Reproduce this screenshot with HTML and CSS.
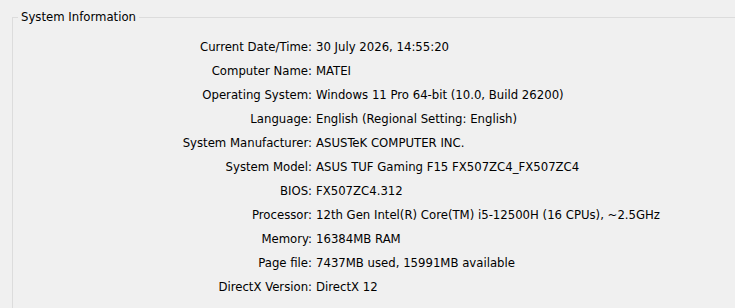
FILE: index.html
```html
<!DOCTYPE html>
<html lang="en">
<head>
<meta charset="utf-8">
<title>System Information</title>
<link rel="stylesheet" href="styles.css">
</head>
<body>
<fieldset class="group">
  <legend class="group-title">System Information</legend>
  <dl class="info">
    <dt>Current Date/Time:</dt><dd>30 July 2026, 14:55:20</dd>
    <dt>Computer Name:</dt><dd>MATEI</dd>
    <dt>Operating System:</dt><dd>Windows 11 Pro 64-bit (10.0, Build 26200)</dd>
    <dt>Language:</dt><dd>English (Regional Setting: English)</dd>
    <dt>System Manufacturer:</dt><dd>ASUSTeK COMPUTER INC.</dd>
    <dt>System Model:</dt><dd>ASUS TUF Gaming F15 FX507ZC4_FX507ZC4</dd>
    <dt>BIOS:</dt><dd>FX507ZC4.312</dd>
    <dt>Processor:</dt><dd>12th Gen Intel(R) Core(TM) i5-12500H (16 CPUs), ~2.5GHz</dd>
    <dt>Memory:</dt><dd>16384MB RAM</dd>
    <dt>Page file:</dt><dd>7437MB used, 15991MB available</dd>
    <dt>DirectX Version:</dt><dd>DirectX 12</dd>
  </dl>
</fieldset>
</body>
</html>
```
FILE: styles.css
```css
html, body {
  margin: 0;
  padding: 0;
  background: #f0f0f0;
}
body {
  font-family: "DejaVu Sans Condensed", "DejaVu Sans", sans-serif;
  font-size: 13px;
  color: #000;
}
.group {
  margin: 9px 0 0 12px;
  padding: 10px 0 9px 5px;
  border-style: solid;
  border-color: #dcdcdc;
  border-width: 1px 0 0 1px;
  min-inline-size: 0;
}
.group-title {
  padding: 0 3px;
  line-height: 16px;
}
.info {
  margin: 0;
  display: grid;
  grid-template-columns: 294px 1fr;
  column-gap: 4px;
  line-height: 24px;
}
.info dt {
  text-align: right;
  white-space: nowrap;
}
.info dd {
  margin: 0;
  white-space: nowrap;
}
```
